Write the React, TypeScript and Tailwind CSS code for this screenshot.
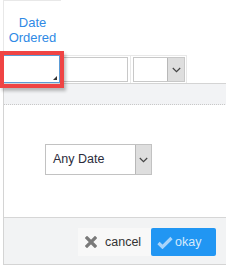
function Grip() {
  return (
    <svg className="absolute bottom-[2px] right-[2px]" width="4" height="4" viewBox="0 0 4 4">
      <path d="M4 0 L4 4 L0 4 Z" fill="#333" />
    </svg>
  )
}

function Chevron() {
  return (
    <svg width="9" height="6" viewBox="0 0 9 6">
      <path d="M0.8 1 L4.5 4.7 L8.2 1" fill="none" stroke="#444" strokeWidth="1.2" />
    </svg>
  )
}

function TimesIcon() {
  return (
    <svg width="12" height="12" viewBox="0 0 12 12">
      <path d="M2 2 L10 10 M10 2 L2 10" stroke="#7a7a7a" strokeWidth="3.2" strokeLinecap="square" />
    </svg>
  )
}

function CheckIcon() {
  return (
    <svg width="16" height="13" viewBox="0 0 16 13">
      <path d="M1.5 7 L5.5 11 L14.5 2" fill="none" stroke="#a9d4fa" strokeWidth="3.2" />
    </svg>
  )
}

export default function App() {
  return (
    <div className="relative h-[266px] w-[226px] overflow-hidden bg-white font-['Liberation_Sans',Arial,sans-serif]">
      {/* column header */}
      <div className="ml-[3px] flex h-[55px] w-[58px] flex-col items-center border-l border-t border-[#e8e8e8] pt-[14px] text-[13px] leading-[15px] text-[#2f8ae5]">
        <span>Date</span>
        <span>Ordered</span>
      </div>

      {/* filter row */}
      <div className="ml-[3px] flex h-[28px]">
        <div className="relative h-[28px] w-[57px] border border-[#5b9bd5] bg-white">
          <Grip />
        </div>
        <div className="flex w-[70px] items-center border-t border-[#e8e8e8] pl-[3px]">
          <div className="h-[25px] w-[65px] border border-[#c8c8c8] bg-white" />
        </div>
        <div className="flex w-[57px] items-center border-x border-t border-[#e8e8e8] pl-[2px]">
          <div className="flex h-[25px] w-[52px] border border-[#c8c8c8] bg-white">
            <div className="flex-1" />
            <div className="flex w-[17px] items-center justify-center border-l border-[#b8b8b8] bg-[#dedede]">
              <Chevron />
            </div>
          </div>
        </div>
      </div>

      {/* dropdown panel */}
      <div className="ml-[3px] flex w-[240px] flex-col border-l border-y border-[#d4d4d4]">
        <div className="h-[21px] border-b border-dotted border-[#c8c8c8] bg-[#f2f3f5]" />
        <div className="h-[112px] bg-white pl-[41px] pt-[39px]">
          <div className="flex h-[31px] w-[107px] border border-[#c2c2c2] bg-white">
            <div className="flex flex-1 items-center pl-[7px] text-[12.5px] text-[#2b2b3b]">Any Date</div>
            <div className="flex w-[16px] items-center justify-center border-l border-[#b8b8b8] bg-[#dedede]">
              <Chevron />
            </div>
          </div>
        </div>
        <div className="flex h-[47px] items-start border-t border-[#d6d6d6] bg-[#f2f3f4] pl-[74px] pt-[10px]">
          <button type="button" className="flex h-[28px] w-[73px] items-center gap-[8px] bg-[#f8f8f8] pl-[7px] text-[12.5px] text-[#333]">
            <TimesIcon />
            cancel
          </button>
          <button type="button" className="flex h-[28px] w-[65px] items-center gap-[2px] rounded-[2px] bg-[#2196f3] pl-[6px] text-[12.5px] text-[#d5eafc]">
            <CheckIcon />
            okay
          </button>
        </div>
      </div>

      {/* highlight overlay */}
      <div className="pointer-events-none absolute left-0 top-[51px] h-[37px] w-[64px] border-4 border-[#ef4444] shadow-[2px_3px_3px_rgba(0,0,0,0.25)]" />
    </div>
  )
}
